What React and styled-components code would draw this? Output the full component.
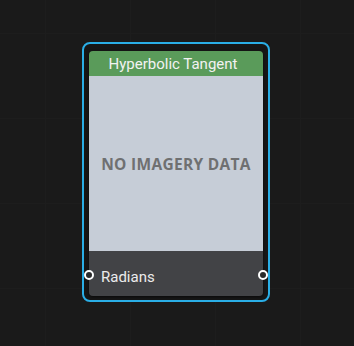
import React from 'react'
import styled, { createGlobalStyle } from 'styled-components'

const GlobalStyle = createGlobalStyle`
  html, body {
    margin: 0;
    padding: 0;
    background: #1a1a1a;
  }
  body {
    font-family: Roboto, "Noto Sans", sans-serif;
  }
`

const Canvas = styled.div`
  width: 354px;
  height: 346px;
  box-sizing: border-box;
  padding: 42px 0 0 82px;
  background-color: #1a1a1a;
  background-image:
    linear-gradient(to right, #1d1d1d 1px, transparent 1px),
    linear-gradient(to bottom, #1d1d1d 1px, transparent 1px);
  background-size: 85px 85px;
  background-position: 45px 33px;
`

const Selection = styled.div`
  width: 188px;
  height: 260px;
  box-sizing: border-box;
  border: 2px solid #2aaee6;
  border-radius: 8px;
  background: #161616;
  padding: 7px 5px 4px 5px;
`

const Node = styled.div`
  position: relative;
  height: 100%;
  display: flex;
  flex-direction: column;
  border-radius: 4px;
  box-shadow: 0 1px 3px rgba(0, 0, 0, 0.6);
`

const Header = styled.div`
  height: 25px;
  background: #5a9b5a;
  border-radius: 4px 4px 0 0;
  color: #f2f2f2;
  font-size: 15px;
  line-height: 27px;
  text-align: center;
  padding-right: 6px;
`

const Preview = styled.div`
  height: 175px;
  background: #c6cdd7;
  display: flex;
  align-items: center;
  justify-content: center;
  color: #6f7071;
  font-family: "Open Sans", sans-serif;
  font-weight: 700;
  font-size: 15.5px;
  letter-spacing: 0.3px;
  padding-top: 1px;
  box-sizing: border-box;
`

const Body = styled.div`
  flex: 1;
  background: #424346;
  border-radius: 0 0 4px 4px;
  display: flex;
  align-items: center;
  padding: 6px 12px 0;
`

const Label = styled.span`
  color: #ececec;
  font-size: 15px;
`

const Port = styled.span`
  position: absolute;
  top: 219px;
  ${p => (p.$side === 'left' ? 'left: -5px;' : 'right: -5px;')}
  width: 10px;
  height: 10px;
  box-sizing: border-box;
  border-radius: 50%;
  border: 2px solid #ffffff;
  background: #2a2a2a;
`

export default function App() {
  return (
    <>
      <GlobalStyle />
      <Canvas>
        <Selection>
          <Node>
            <Header>Hyperbolic Tangent</Header>
            <Preview>NO IMAGERY DATA</Preview>
            <Body>
              <Label>Radians</Label>
            </Body>
            <Port $side="left" />
            <Port $side="right" />
          </Node>
        </Selection>
      </Canvas>
    </>
  )
}
